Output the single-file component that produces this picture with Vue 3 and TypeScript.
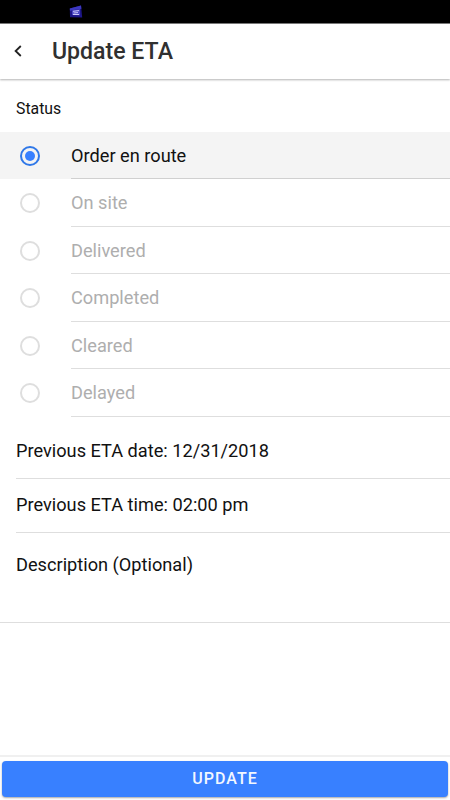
<script setup lang="ts">
import { ref } from 'vue'

const statuses: string[] = ['Order en route', 'On site', 'Delivered', 'Completed', 'Cleared', 'Delayed']
const selected = ref<string>('Order en route')
</script>

<template>
  <div class="screen">
    <div class="statusbar">
      <svg class="badge" viewBox="0 0 14 14">
        <path d="M0.8 3.5 12 .5l1.2 12L1 12.2z" fill="#1d1688" />
        <path d="M0.8 3.5 12 .5l.4 3.3-11.4 2z" fill="#3d38c0" />
        <path d="M3 5.5 11 4.3v6L3 10z" fill="#4a46c4" />
        <path d="M4 6.3l6-.7M4.5 8l4.5-.4M4 9.5h6" fill="none" stroke="#cac8fa" stroke-width="1" />
      </svg>
    </div>
    <header class="toolbar">
      <svg class="back" viewBox="0 0 10 14"><path d="M7.8 2 2.6 7 7.8 12" fill="none" stroke="#222" stroke-width="1.8" /></svg>
      <h1>Update ETA</h1>
    </header>
    <main class="content">
      <div class="label">Status</div>
      <div
        v-for="s in statuses"
        :key="s"
        class="option"
        :class="{ checked: s === selected }"
        @click="selected = s"
      >
        <span class="radio"></span>
        <span class="name">{{ s }}</span>
      </div>
      <div class="row date">Previous ETA date: 12/31/2018</div>
      <div class="row time">Previous ETA time: 02:00 pm</div>
      <div class="row description">Description (Optional)</div>
    </main>
    <footer class="footer"><button class="update">UPDATE</button></footer>
  </div>
</template>

<style>
body { background: #fff; }
</style>

<style scoped>
.screen { width: 450px; height: 800px; display: flex; flex-direction: column; background: #fff; font-family: Roboto, sans-serif; color: #111; overflow: hidden; }
.screen * { box-sizing: border-box; }
.statusbar { height: 23px; flex: none; background: #000; padding: 5px 0 0 69px; }
.badge { display: block; width: 14px; height: 14px; }
.toolbar { height: 56px; flex: none; display: flex; align-items: center; padding: 0 0 0 13px; background: #fff; border-top: 1px solid #777; box-shadow: 0 1px 2px rgba(0,0,0,.3); }
.back { width: 10px; height: 14px; margin-bottom: 1px; }
h1 { margin: 0 0 0 29px; font-size: 23.1px; font-weight: 500; line-height: 28px; color: #303030; }
.content { flex: 1; }
.label { height: 52.7px; padding: 19px 0 0 16px; font-size: 15.8px; line-height: 22px; }
.option { height: 47.5px; display: flex; align-items: stretch; padding-left: 20px; color: #aeaeae; font-size: 18.2px; }
.option.checked { background: #f4f4f4; color: #111; }
.radio { width: 20px; height: 20px; margin-top: 1px; align-self: center; border: 2px solid #dedede; border-radius: 50%; display: flex; align-items: center; justify-content: center; }
.checked .radio { border-color: #3078e8; }
.checked .radio::after { content: ''; width: 10px; height: 10px; border-radius: 50%; background: #3880ff; }
.name { flex: 1; margin-left: 31px; padding-top: 1px; display: flex; align-items: center; border-bottom: 1px solid #dedede; }
.checked .name { border-bottom-color: #d0d0d0; }
.row { margin-left: 16px; border-bottom: 1px solid #dedede; font-size: 18.2px; line-height: 24px; }
.date { height: 62px; padding-top: 22px; }
.time { height: 54.3px; padding-top: 14.5px; }
.description { height: 90px; margin-left: 0; padding: 20px 0 0 16px; }
.footer { height: 45px; flex: none; padding: 4px 2px 3px; border-top: 2px solid #f0f0f0; }
.update { display: block; width: 100%; height: 36px; padding: 0 0 2px; border: 0; border-radius: 4px; background: #3880ff; color: #f2f7ff; font: 500 16px Roboto, sans-serif; letter-spacing: 1px; box-shadow: 0 1px 2px rgba(0,0,0,.35); }
</style>
